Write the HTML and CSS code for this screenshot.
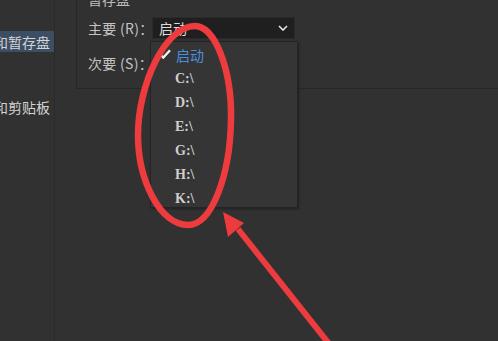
FILE: index.html
```html
<!DOCTYPE html>
<html lang="zh">
<head>
<meta charset="utf-8">
<link rel="stylesheet" href="styles.css">
</head>
<body>
<div class="app">
  <aside class="sidebar">
    <div class="nav-item active"><span class="nav-text">和暂存盘</span></div>
    <div class="nav-item"><span class="nav-text">和剪贴板</span></div>
  </aside>
  <main class="main">
    <section class="group">
      <div class="group-title">暂存盘</div>
      <div class="row row-first">
        <span class="label">主要 (R)：</span>
        <div class="select">
          <span class="select-value">启动</span>
          <svg class="chev" width="10" height="6" viewBox="0 0 10 6"><path d="M1 1 L5 5 L9 1" fill="none" stroke="#e6e6e6" stroke-width="1.6"/></svg>
        </div>
      </div>
      <div class="row row-second">
        <span class="label">次要 (S)：</span>
      </div>
      <ul class="menu">
        <li class="menu-item checked"><svg class="check" width="12" height="10" viewBox="0 0 12 10"><path d="M1 5.2 L4.3 8.6 L11 1.2" fill="none" stroke="#f2f2f2" stroke-width="2.3"/></svg><span class="menu-text">启动</span></li>
        <li class="menu-item"><span class="menu-text">C:\</span></li>
        <li class="menu-item"><span class="menu-text">D:\</span></li>
        <li class="menu-item"><span class="menu-text">E:\</span></li>
        <li class="menu-item"><span class="menu-text">G:\</span></li>
        <li class="menu-item"><span class="menu-text">H:\</span></li>
        <li class="menu-item"><span class="menu-text">K:\</span></li>
      </ul>
    </section>
  </main>
</div>
<svg class="annot" width="498" height="341" viewBox="0 0 498 341">
  <path d="M195,26 C215,26 232,70 231,120 C230,175 212,225 188,225 C160,225 138,180 138,135 C138,85 165,26 195,26 Z" fill="none" stroke="#ee3b3e" stroke-width="6.5"/>
  <line x1="238" y1="229" x2="330" y2="345" stroke="#ee3b3e" stroke-width="6" stroke-linecap="butt"/>
  <polygon points="223,212 244,223 228,237" fill="#ee3b3e"/>
</svg>
</body>
</html>
```
FILE: styles.css
```css
* { box-sizing: border-box; margin: 0; padding: 0; }
html, body {
  width: 498px;
  height: 341px;
  overflow: hidden;
  background: #313131;
}
body {
  font-family: "Noto Sans CJK SC", "Noto Sans", sans-serif;
  color: #c9c9c9;
  position: relative;
}
.app {
  display: flex;
  height: 341px;
}
.sidebar {
  width: 55px;
  flex: none;
  border-right: 1px solid #2a2a2a;
  padding-top: 31px;
  display: flex;
  flex-direction: column;
  gap: 44px;
  overflow: hidden;
}
.nav-item {
  height: 21px;
  display: flex;
  align-items: center;
  white-space: nowrap;
  font-size: 14px;
  color: #d4d4d4;
}
.nav-item.active {
  background: #3c4e64;
  width: 54px;
}
.nav-text {
  margin-left: -6px;
}
.main {
  flex: 1;
  padding-left: 21px;
}
.group {
  position: relative;
  margin-top: -9px;
  border-left: 1px solid #262626;
  border-bottom: 1px solid #272727;
  height: 98px;
  padding-left: 11px;
}
.group-title {
  font-size: 14px;
  line-height: 16px;
  height: 16px;
  color: #bdbdbd;
}
.row {
  display: flex;
  align-items: center;
}
.row-first {
  margin-top: 10px;
  height: 22px;
}
.row-second {
  margin-top: 13px;
  height: 22px;
}
.label {
  font-size: 14px;
  color: #c4c4c4;
  width: 64px;
  white-space: nowrap;
  letter-spacing: 0.3px;
}
.select {
  width: 143px;
  height: 22px;
  background: #1f1f1f;
  border: 1px solid #2a2a2a;
  display: flex;
  align-items: center;
  justify-content: space-between;
  padding: 0 6px 0 6px;
}
.select-value {
  font-size: 14px;
  color: #dcdcdc;
}
.menu {
  position: absolute;
  left: 73px;
  top: 50px;
  width: 148px;
  height: 167px;
  list-style: none;
  background: #353535;
  border: 1px solid #242424;
  box-shadow: 1px 1px 2px rgba(0,0,0,0.35);
  padding-top: 1px;
}
.menu-item {
  height: 24px;
  display: flex;
  align-items: center;
  padding-left: 24px;
  position: relative;
  font-family: "Liberation Serif", "Noto Sans CJK SC", serif;
  font-weight: bold;
  font-size: 14px;
  color: #cfcfcf;
}
.menu-item.checked .menu-text {
  font-family: "Noto Sans CJK SC", sans-serif;
  font-weight: normal;
  color: #4b8fdc;
  margin-left: 1px;
}
.check {
  position: absolute;
  left: 8px;
  top: 6px;
}
.annot {
  position: absolute;
  left: 0;
  top: 0;
  pointer-events: none;
}
```
